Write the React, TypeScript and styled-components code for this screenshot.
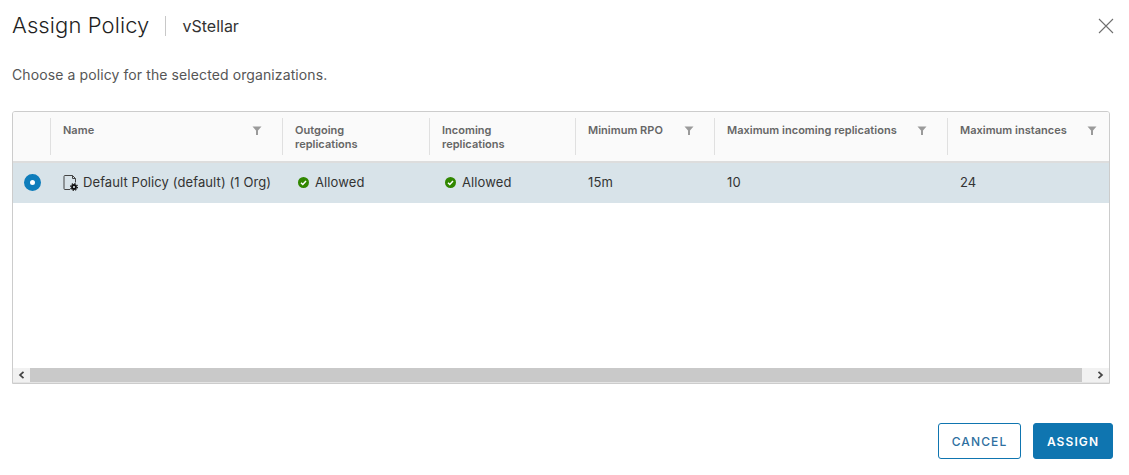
import React from 'react';
import styled, { createGlobalStyle } from 'styled-components';

const columns = '38px 232px 147px 146px 139px 233px 161px';

const GlobalStyle = createGlobalStyle`
  html, body {
    margin: 0;
    background: #fff;
  }
  body {
    font-family: Inter, "Open Sans", sans-serif;
    color: #333;
  }
`;

const Modal = styled.div`
  width: 1129px;
  height: 475px;
  box-sizing: border-box;
  padding: 10px 16px 0 12px;
  display: flex;
  flex-direction: column;
`;
const Header = styled.header`
  display: flex;
  align-items: center;
  height: 32px;
`;
const Title = styled.h1`
  margin: 0 0 3px;
  font-size: 22px;
  font-weight: 300;
  letter-spacing: 0.1px;
  color: #1f1f1f;
`;
const Divider = styled.span`
  width: 1px;
  height: 20px;
  margin: 0 16px;
  background: #c8c8c8;
`;
const Subtitle = styled.span`
  font-size: 16px;
  font-weight: 400;
  color: #333;
`;
const Close = styled.button`
  margin-left: auto;
  margin-right: -1px;
  padding: 0;
  border: none;
  background: none;
  display: flex;
`;
const Intro = styled.p`
  margin: 24px 0 0;
  font-size: 14px;
  line-height: 18px;
  letter-spacing: 0.1px;
  color: #565656;
`;
const Grid = styled.section`
  margin-top: 27px;
  width: 1098px;
  height: 273px;
  box-sizing: border-box;
  border: 1px solid #ccc;
  border-radius: 3px 3px 0 0;
  display: flex;
  flex-direction: column;
  overflow: hidden;
`;
const HeaderRow = styled.div`
  display: grid;
  grid-template-columns: ${columns};
  height: 51px;
  box-sizing: border-box;
  background: #fafafa;
  border-bottom: 2px solid #ddd;
  flex-shrink: 0;
`;
const HeaderCell = styled.div`
  position: relative;
  display: flex;
  justify-content: space-between;
  padding: 11px 21px 0 12px;
  box-sizing: border-box;
  font-size: 11px;
  line-height: 14px;
  font-weight: 600;
  color: #666;
  letter-spacing: 0.02px;
  &::after {
    content: '';
    position: absolute;
    top: 6px;
    bottom: 6px;
    right: 0;
    width: 1px;
    background: #e0e0e0;
  }
  &:last-child {
    padding-right: 12px;
  }
  &:last-child::after {
    display: none;
  }
`;
const Row = styled.div`
  display: grid;
  grid-template-columns: ${columns};
  height: 40px;
  background: #d8e3e9;
  flex-shrink: 0;
`;
const Cell = styled.div<{ $status?: boolean }>`
  display: flex;
  align-items: center;
  padding: 0 0 2px ${({ $status }) => ($status ? '15px' : '12px')};
  font-size: 13px;
  color: #333;
  letter-spacing: 0.1px;
  white-space: nowrap;
`;
const Radio = styled.span`
  width: 17px;
  height: 17px;
  margin-left: -1px;
  border-radius: 50%;
  background: #fff;
  border: 6.5px solid #0f7dbb;
  box-sizing: border-box;
`;
const PolicyName = styled.span`
  margin-left: 4px;
`;
const Status = styled.span`
  margin-left: 6px;
`;
const Body = styled.div`
  flex: 1;
`;
const ScrollBar = styled.div`
  height: 15px;
  display: flex;
  background: #f1f1f1;
  border-bottom: 1px solid #e4e4e4;
  box-sizing: border-box;
`;
const ScrollArrow = styled.div<{ $end?: boolean }>`
  width: ${({ $end }) => ($end ? '27px' : '17px')};
  box-sizing: border-box;
  padding-right: ${({ $end }) => ($end ? '5px' : '0')};
  display: flex;
  align-items: center;
  justify-content: ${({ $end }) => ($end ? 'flex-end' : 'center')};
`;
const ScrollThumb = styled.div`
  flex: 1;
  background: #c9c9c9;
`;
const Footer = styled.footer`
  display: flex;
  justify-content: flex-end;
  gap: 12px;
  margin-top: 39px;
`;
const Button = styled.button<{ $primary?: boolean }>`
  height: 36px;
  padding: 0;
  width: ${({ $primary }) => ($primary ? '80px' : '83px')};
  border-radius: 3px;
  border: 1px solid #0f75b0;
  background: ${({ $primary }) => ($primary ? '#0f75b0' : '#fff')};
  color: ${({ $primary }) => ($primary ? '#fff' : '#2f6f9f')};
  font-family: inherit;
  font-size: 12px;
  font-weight: ${({ $primary }) => ($primary ? 600 : 500)};
  letter-spacing: 1.1px;
`;

const FilterIcon = () => (
  <svg width="10" height="9" viewBox="0 0 10 9" style={{ flexShrink: 0, marginTop: 3 }}>
    <path d="M0.5 0.5h9L6 4.5V9H4V4.5z" fill="#9a9a9a" />
  </svg>
);

const CheckIcon = () => (
  <svg width="11" height="11" viewBox="0 0 11 11">
    <circle cx="5.5" cy="5.5" r="5.5" fill="#318700" />
    <path d="M3 5.7l1.8 1.8L8 4" fill="none" stroke="#fff" strokeWidth="1.5" />
  </svg>
);

const PolicyIcon = () => (
  <svg width="16" height="16" viewBox="0 0 16 16" style={{ marginTop: 2 }}>
    <path
      d="M9.5 0.5H2a1 1 0 0 0-1 1v12a1 1 0 0 0 1 1h5M9.5 0.5l3 3v4M9.5 0.5v3h3"
      fill="none"
      stroke="#444"
      strokeWidth="1"
    />
    <circle cx="11" cy="12" r="2" fill="none" stroke="#111" strokeWidth="1.8" />
    <circle cx="11" cy="12" r="3.4" fill="none" stroke="#111" strokeWidth="1.2" strokeDasharray="1.4 1.25" />
  </svg>
);

const Chevron = ({ left }: { left?: boolean }) => (
  <svg width="7" height="8" viewBox="0 0 7 8">
    <path
      d={left ? 'M5.5 0.8L2 4l3.5 3.2' : 'M1.5 0.8L5 4 1.5 7.2'}
      fill="none"
      stroke="#444"
      strokeWidth="1.7"
    />
  </svg>
);

const headers: { label: React.ReactNode; filter: boolean }[] = [
  { label: 'Name', filter: true },
  { label: <>Outgoing<br />replications</>, filter: false },
  { label: <>Incoming<br />replications</>, filter: false },
  { label: 'Minimum RPO', filter: true },
  { label: 'Maximum incoming replications', filter: true },
  { label: 'Maximum instances', filter: true },
];

function App() {
  return (
    <Modal>
      <GlobalStyle />
      <Header>
        <Title>Assign Policy</Title>
        <Divider />
        <Subtitle>vStellar</Subtitle>
        <Close type="button" aria-label="Close">
          <svg width="16" height="16" viewBox="0 0 16 16">
            <path d="M1 1l14 14M15 1L1 15" stroke="#6f6f6f" strokeWidth="1.1" />
          </svg>
        </Close>
      </Header>
      <Intro>Choose a policy for the selected organizations.</Intro>
      <Grid>
        <HeaderRow>
          <HeaderCell />
          {headers.map((header, index) => (
            <HeaderCell key={index}>
              <span>{header.label}</span>
              {header.filter && <FilterIcon />}
            </HeaderCell>
          ))}
        </HeaderRow>
        <Row>
          <Cell>
            <Radio />
          </Cell>
          <Cell>
            <PolicyIcon />
            <PolicyName>Default Policy (default) (1 Org)</PolicyName>
          </Cell>
          <Cell $status>
            <CheckIcon />
            <Status>Allowed</Status>
          </Cell>
          <Cell $status>
            <CheckIcon />
            <Status>Allowed</Status>
          </Cell>
          <Cell>15m</Cell>
          <Cell>10</Cell>
          <Cell>24</Cell>
        </Row>
        <Body />
        <ScrollBar>
          <ScrollArrow>
            <Chevron left />
          </ScrollArrow>
          <ScrollThumb />
          <ScrollArrow $end>
            <Chevron />
          </ScrollArrow>
        </ScrollBar>
      </Grid>
      <Footer>
        <Button type="button">CANCEL</Button>
        <Button type="button" $primary>
          ASSIGN
        </Button>
      </Footer>
    </Modal>
  );
}

export default App;
